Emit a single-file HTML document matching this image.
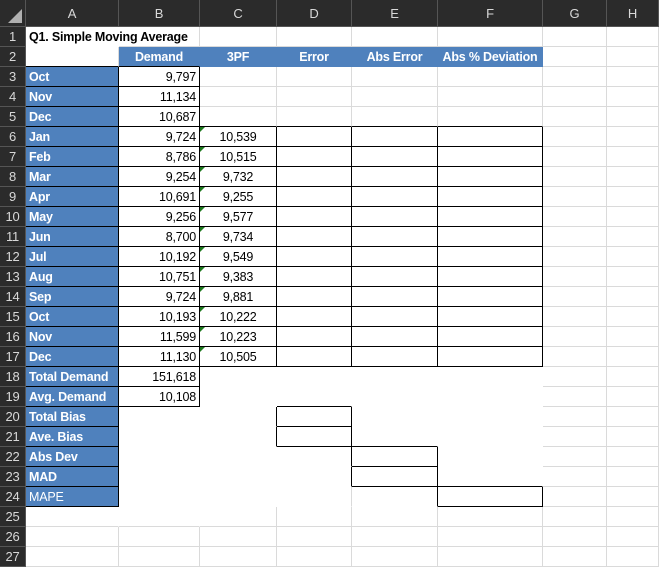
<!DOCTYPE html>
<html><head><meta charset="utf-8"><style>
*{margin:0;padding:0;box-sizing:border-box}
body{width:659px;height:566px;overflow:hidden;background:#fff;font-family:"Liberation Sans",sans-serif;font-size:12.5px;letter-spacing:-0.2px}
table{border-collapse:separate;border-spacing:0;table-layout:fixed;width:659px}
td{height:20px;border-right:1px solid #dadada;border-bottom:1px solid #dadada;padding:0 3px;white-space:nowrap;overflow:visible;color:#000;position:relative}
th{background:#2b2b2b;color:#d8d8d8;font-weight:normal;border-right:1px solid #555;border-bottom:1px solid #555;font-size:13px}
thead th{height:27px}
tbody th{text-align:center;font-size:13px}
.bl{background:#4f81bd;color:#fff;font-weight:bold;border-right-color:#000;border-bottom-color:#000}
.hb{background:#4f81bd;color:#fff;font-weight:bold;text-align:center;border-right-color:#4f81bd;border-bottom-color:#4f81bd}
.n{border-right-color:#fff;border-bottom-color:#fff}
.nr{border-right-color:#fff}
.nb{border-bottom-color:#fff}
.R{border-right-color:#000!important}
.B{border-bottom-color:#000!important}
.num{text-align:right}
.c{text-align:center}
.g::before{content:"";position:absolute;left:0;top:0;border-top:5px solid #1e7a1e;border-right:5px solid transparent}
</style></head><body>
<table>
<colgroup><col style="width:26px"><col style="width:93px"><col style="width:81px"><col style="width:77px"><col style="width:75px"><col style="width:86px"><col style="width:105px"><col style="width:64px"><col style="width:52px"></colgroup>
<thead><tr><th style="position:relative"><div style="position:absolute;right:3px;bottom:3px;border-left:14px solid transparent;border-bottom:14px solid #b0b0b0"></div></th><th>A</th><th>B</th><th>C</th><th>D</th><th>E</th><th>F</th><th>G</th><th>H</th></tr></thead>
<tbody>
<tr><th>1</th><td class="n" style="font-weight:bold">Q1. Simple Moving Average</td><td></td><td></td><td></td><td></td><td></td><td></td><td></td></tr>
<tr><th>2</th><td class="B"></td><td class="hb B">Demand</td><td class="hb">3PF</td><td class="hb">Error</td><td class="hb">Abs Error</td><td class="hb">Abs % Deviation</td><td></td><td></td></tr>
<tr><th>3</th><td class="bl">Oct</td><td class="num R B">9,797</td><td></td><td></td><td></td><td></td><td></td><td></td></tr>
<tr><th>4</th><td class="bl">Nov</td><td class="num R B">11,134</td><td></td><td></td><td></td><td></td><td></td><td></td></tr>
<tr><th>5</th><td class="bl">Dec</td><td class="num R B">10,687</td><td class="B"></td><td class="B"></td><td class="B"></td><td class="B"></td><td></td><td></td></tr>
<tr><th>6</th><td class="bl">Jan</td><td class="num R B">9,724</td><td class="c g R B">10,539</td><td class="R B"></td><td class="R B"></td><td class="R B"></td><td></td><td></td></tr>
<tr><th>7</th><td class="bl">Feb</td><td class="num R B">8,786</td><td class="c g R B">10,515</td><td class="R B"></td><td class="R B"></td><td class="R B"></td><td></td><td></td></tr>
<tr><th>8</th><td class="bl">Mar</td><td class="num R B">9,254</td><td class="c g R B">9,732</td><td class="R B"></td><td class="R B"></td><td class="R B"></td><td></td><td></td></tr>
<tr><th>9</th><td class="bl">Apr</td><td class="num R B">10,691</td><td class="c g R B">9,255</td><td class="R B"></td><td class="R B"></td><td class="R B"></td><td></td><td></td></tr>
<tr><th>10</th><td class="bl">May</td><td class="num R B">9,256</td><td class="c g R B">9,577</td><td class="R B"></td><td class="R B"></td><td class="R B"></td><td></td><td></td></tr>
<tr><th>11</th><td class="bl">Jun</td><td class="num R B">8,700</td><td class="c g R B">9,734</td><td class="R B"></td><td class="R B"></td><td class="R B"></td><td></td><td></td></tr>
<tr><th>12</th><td class="bl">Jul</td><td class="num R B">10,192</td><td class="c g R B">9,549</td><td class="R B"></td><td class="R B"></td><td class="R B"></td><td></td><td></td></tr>
<tr><th>13</th><td class="bl">Aug</td><td class="num R B">10,751</td><td class="c g R B">9,383</td><td class="R B"></td><td class="R B"></td><td class="R B"></td><td></td><td></td></tr>
<tr><th>14</th><td class="bl">Sep</td><td class="num R B">9,724</td><td class="c g R B">9,881</td><td class="R B"></td><td class="R B"></td><td class="R B"></td><td></td><td></td></tr>
<tr><th>15</th><td class="bl">Oct</td><td class="num R B">10,193</td><td class="c g R B">10,222</td><td class="R B"></td><td class="R B"></td><td class="R B"></td><td></td><td></td></tr>
<tr><th>16</th><td class="bl">Nov</td><td class="num R B">11,599</td><td class="c g R B">10,223</td><td class="R B"></td><td class="R B"></td><td class="R B"></td><td></td><td></td></tr>
<tr><th>17</th><td class="bl">Dec</td><td class="num R B">11,130</td><td class="c g R B">10,505</td><td class="R B"></td><td class="R B"></td><td class="R B"></td><td></td><td></td></tr>
<tr><th>18</th><td class="bl">Total Demand</td><td class="num R B">151,618</td><td class="n"></td><td class="n"></td><td class="n"></td><td class="n"></td><td></td><td></td></tr>
<tr><th>19</th><td class="bl">Avg. Demand</td><td class="num R B">10,108</td><td class="n"></td><td class="n B"></td><td class="n"></td><td class="n"></td><td></td><td></td></tr>
<tr><th>20</th><td class="bl">Total Bias</td><td class="n"></td><td class="n R"></td><td class="R B"></td><td class="n"></td><td class="n"></td><td></td><td></td></tr>
<tr><th>21</th><td class="bl">Ave. Bias</td><td class="n"></td><td class="n R"></td><td class="R B"></td><td class="n B"></td><td class="n"></td><td></td><td></td></tr>
<tr><th>22</th><td class="bl">Abs Dev</td><td class="n"></td><td class="n"></td><td class="n R"></td><td class="R B"></td><td class="n"></td><td></td><td></td></tr>
<tr><th>23</th><td class="bl">MAD</td><td class="n"></td><td class="n"></td><td class="n R"></td><td class="R B"></td><td class="n B"></td><td></td><td></td></tr>
<tr><th>24</th><td class="bl" style="font-weight:normal">MAPE</td><td class="n"></td><td class="n"></td><td class="nb"></td><td class="n R"></td><td class="R B"></td><td></td><td></td></tr>
<tr><th>25</th><td class="nr"></td><td class="nr"></td><td></td><td></td><td></td><td></td><td></td><td></td></tr>
<tr><th>26</th><td></td><td></td><td></td><td></td><td></td><td></td><td></td><td></td></tr>
<tr><th>27</th><td></td><td></td><td></td><td></td><td></td><td></td><td></td><td></td></tr>
</tbody></table>
</body></html>
